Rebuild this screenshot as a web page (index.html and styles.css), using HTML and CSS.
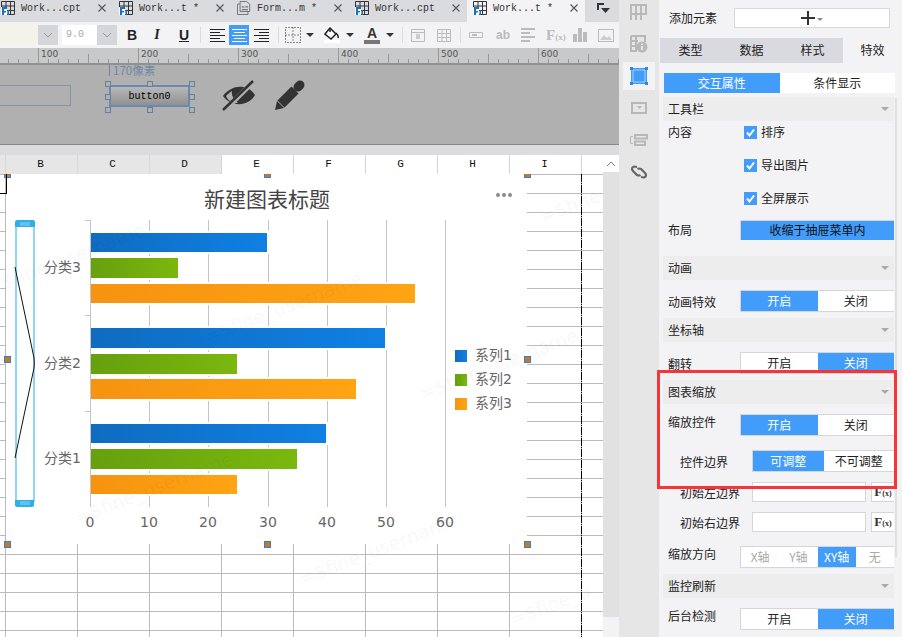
FILE: index.html
```html
<!doctype html>
<html lang="zh">
  <head>
    <meta charset="utf-8" />
    <title>图表缩放</title>
    <link rel="stylesheet" href="styles.css">
  </head>
  <body>
    <svg class="defs" width="0" height="0">
      <symbol id="i-cpt" viewBox="0 0 14 14">
        <path d="M.5.5h13v13H.5zM.5 5h13M5 .5V13.5M9.500 .5V13.500M.5 9.500h13" fill="none" stroke="#333"/>
        <path d="M0 6h6v8H0z" fill="#fff"/>
        <path d="M1 6h5v2H3v2h2v1.500H3V14H1zM6.500 9H8v5H6.500z" fill="#1273c4"/>
      </symbol>
      <symbol id="i-frm" viewBox="0 0 16 16">
        <path d="M1 3.500h2M.5 3.500V15.500H12.500V12M3.500 .5H11l3.500 3V12H3.500z" fill="none" stroke="#666"/>
        <path d="M5.500 6h3v1.500h-3zM9.500 6h3v1.500h-3zM5.500 9h7v1.500h-7z" fill="#777"/>
      </symbol>
      <symbol id="i-close" viewBox="0 0 8 8">
        <path d="M.5.5l7 7M7.500 .5l-7 7" fill="none" stroke="#555" stroke-width="1.100"/>
      </symbol>
    </svg>

    <div class="app">
      <div class="editor">
        <div class="tabbar">
          <div class="tab"><svg class="tab-icon"><use href="#i-cpt"/></svg><span class="tab-name">Work...cpt</span><svg class="tab-x"><use href="#i-close"/></svg></div>
          <div class="tab"><svg class="tab-icon"><use href="#i-cpt"/></svg><span class="tab-name">Work...t *</span><svg class="tab-x"><use href="#i-close"/></svg></div>
          <div class="tab"><svg class="tab-icon"><use href="#i-frm"/></svg><span class="tab-name">Form...m *</span><svg class="tab-x"><use href="#i-close"/></svg></div>
          <div class="tab"><svg class="tab-icon"><use href="#i-cpt"/></svg><span class="tab-name">Work...cpt</span><svg class="tab-x"><use href="#i-close"/></svg></div>
          <div class="tab active"><svg class="tab-icon"><use href="#i-cpt"/></svg><span class="tab-name">Work...t *</span><svg class="tab-x"><use href="#i-close"/></svg></div>
          <svg class="tab-more" width="14" height="12" viewBox="0 0 14 12"><path d="M1 0h7v2H3v5H1zM5 5h9l-4.500 5z" fill="#333"/></svg>
        </div>

        <div class="toolbar">
          <div class="combo combo-font"><span class="combo-value"></span><span class="combo-arrow"><svg width="10" height="6" viewBox="0 0 10 6"><path d="M1 1l4 4 4-4" fill="none" stroke="#999"/></svg></span></div>
          <div class="combo combo-size"><span class="combo-value">9.0</span><span class="combo-arrow"><svg width="10" height="6" viewBox="0 0 10 6"><path d="M1 1l4 4 4-4" fill="none" stroke="#999"/></svg></span></div>
          <span class="tool t-bold">B</span>
          <span class="tool t-italic">I</span>
          <span class="tool t-under">U</span>
          <span class="sep s-1"></span>
          <span class="tool t-align"><svg width="15" height="13" viewBox="0 0 15 13"><path d="M0 .5h15M0 3.500h10M0 6.500h15M0 9.500h10M0 12.500h15" stroke="#222"/></svg></span>
          <span class="tool t-align on"><svg width="15" height="13" viewBox="0 0 15 13"><path d="M0 .5h15M2 3.500h11M0 6.500h15M2 9.500h11M0 12.500h15" stroke="#fff"/></svg></span>
          <span class="tool t-align"><svg width="15" height="13" viewBox="0 0 15 13"><path d="M0 .5h15M5 3.500h10M0 6.500h15M5 9.500h10M0 12.500h15" stroke="#222"/></svg></span>
          <span class="sep s-2"></span>
          <svg class="t-border" width="16" height="16" viewBox="0 0 16 16"><path d="M.5.5h15v15H.5zM8 .5v15M.5 8h15" fill="none" stroke="#222" stroke-dasharray="1 2"/></svg>
          <span class="caret c-border"></span>
          <svg class="t-fill" width="16" height="16" viewBox="0 0 16 16"><path d="M6 1l6 6-5 5-6-5z" fill="#fff" stroke="#222" stroke-width="1.500"/><path d="M6 1v4M12 6c2 2 3 3 2 5" fill="none" stroke="#222" stroke-width="1.500"/><path d="M0 13h16v3H0z" fill="#fff"/></svg>
          <span class="caret c-fill"></span>
          <span class="t-color">A</span>
          <span class="caret c-color"></span>
          <span class="sep s-3"></span>
          <svg class="t-cell1" width="14" height="13" viewBox="0 0 14 13"><path d="M.5.5h13v12H.5zM.5 3.500h13" fill="none" stroke="#bbb"/><path d="M5 5h4v5H5z" fill="#ccc"/></svg>
          <svg class="t-cell2" width="14" height="13" viewBox="0 0 14 13"><path d="M.5.5h13v12H.5zM.5 4.500h13M.5 8.500h13M5 .5v12M9.500 .5v12" fill="none" stroke="#bbb"/></svg>
          <span class="sep s-4"></span>
          <svg class="t-field" width="14" height="6" viewBox="0 0 14 6"><path d="M.5.5h13v5H.5z" fill="none" stroke="#bbb"/><path d="M3 2h5v2H3z" fill="#bbb"/></svg>
          <span class="t-ab">ab</span>
          <svg class="t-lines" width="14" height="14" viewBox="0 0 14 14"><path d="M0 1h14M0 5h9M0 9h14M0 13h9" stroke="#bbb" stroke-width="2"/></svg>
          <span class="t-fx">F<small>(x)</small></span>
          <svg class="t-bars" width="14" height="14" viewBox="0 0 14 14"><path d="M0 6h4v8H0zM5 0h4v14H5zM10 4h4v10h-4z" fill="#bbb"/></svg>
          <svg class="t-pic" width="16" height="13" viewBox="0 0 16 13"><path d="M.5.5h15v12H.5z" fill="none" stroke="#bbb"/><path d="M2 11l4-5 3 3 2-2 3 4z" fill="#ccc"/></svg>
        </div>

        <div class="ruler">
          <div class="ruler-cell"></div>
          <div class="ruler-cell">100</div>
          <div class="ruler-cell">200</div>
          <div class="ruler-cell">300</div>
          <div class="ruler-cell">400</div>
          <div class="ruler-cell">500</div>
          <div class="ruler-cell">600</div>
        </div>

        <div class="form-area">
          <div class="ghost-input"></div>
          <div class="widget">
            <span class="widget-size">170像素</span>
            <div class="widget-btn">button0</div>
            <i class="grip g1"></i><i class="grip g2"></i><i class="grip g3"></i><i class="grip g4"></i>
            <i class="grip g5"></i><i class="grip g6"></i><i class="grip g7"></i><i class="grip g8"></i>
          </div>
          <svg class="eye" width="34" height="32" viewBox="0 0 34 32">
            <path d="M1 16C9 5 25 3 33 15 27 26 10 28 1 16z" fill="#333"/>
            <path d="M4 16C6 21 11 23 16 23 12 20 9 15 10 11 8 12 6 14 4 16z" fill="#b0b0b0"/>
            <path d="M2 31L31 2" stroke="#b0b0b0" stroke-width="5"/>
            <path d="M1 30L31 1" stroke="#333" stroke-width="2.500"/>
          </svg>
          <svg class="pencil" width="31" height="31" viewBox="0 0 31 31">
            <path d="M1 30l2-9 7 7z" fill="#333"/>
            <path d="M7 24L21 10" stroke="#333" stroke-width="10"/>
            <path d="M24 7l2-2" stroke="#333" stroke-width="9" stroke-linecap="round"/>
          </svg>
        </div>

        <div class="form-gap"></div>

        <div class="col-head">
          <div class="col col-stub"></div>
          <div class="col col-on">B</div>
          <div class="col col-on">C</div>
          <div class="col col-on">D</div>
          <div class="col">E</div>
          <div class="col">F</div>
          <div class="col">G</div>
          <div class="col">H</div>
          <div class="col">I</div>
          <div class="col"></div>
        </div>

        <div class="sheet-wrap">
          <div class="sheet">
            <div class="cell-mark"></div>
            <div class="page-break"></div>

            <svg class="chart" width="521" height="370" viewBox="6 174 521 370">
              <defs>
                <linearGradient id="g-blue"><stop offset="0" stop-color="#0f6cc0"/><stop offset="1" stop-color="#0f80e3"/></linearGradient>
                <linearGradient id="g-green"><stop offset="0" stop-color="#66a00e"/><stop offset="1" stop-color="#7ab80e"/></linearGradient>
                <linearGradient id="g-orange"><stop offset="0" stop-color="#f69310"/><stop offset="1" stop-color="#ffa413"/></linearGradient>
              </defs>
              <rect x="6" y="174" width="521" height="370" fill="#fff"/>
              <text class="chart-title" x="267" y="207" text-anchor="middle">新建图表标题</text>
              <g fill="#888"><circle cx="498" cy="195" r="2"/><circle cx="504" cy="195" r="2"/><circle cx="510" cy="195" r="2"/></g>

              <path class="grid" d="M149.500 220V507M208.500 220V507M268.500 220V507M327.500 220V507M386.500 220V507M445.500 220V507"/>
              <path class="grid" d="M90.500 220V507M85 220.500H90M85 315.500H90M85 411.500H90"/>

              <g fill="#fff">
                <rect x="91" y="231" width="178" height="23"/><rect x="91" y="256" width="89" height="24"/><rect x="91" y="282" width="326" height="23"/>
                <rect x="91" y="326" width="296" height="24"/><rect x="91" y="352" width="148" height="24"/><rect x="91" y="377" width="267" height="24"/>
                <rect x="91" y="422" width="237" height="23"/><rect x="91" y="447" width="208" height="24"/><rect x="91" y="473" width="148" height="23"/>
              </g>
              <rect fill="url(#g-blue)" x="91" y="233" width="176" height="19"/>
              <rect fill="url(#g-green)" x="91" y="258" width="87" height="20"/>
              <rect fill="url(#g-orange)" x="91" y="284" width="324" height="19"/>
              <rect fill="url(#g-blue)" x="91" y="328" width="294" height="20"/>
              <rect fill="url(#g-green)" x="91" y="354" width="146" height="20"/>
              <rect fill="url(#g-orange)" x="91" y="379" width="265" height="20"/>
              <rect fill="url(#g-blue)" x="91" y="424" width="235" height="19"/>
              <rect fill="url(#g-green)" x="91" y="449" width="206" height="20"/>
              <rect fill="url(#g-orange)" x="91" y="475" width="146" height="19"/>

              <g class="chart-label" text-anchor="end">
                <text x="81" y="272">分类3</text>
                <text x="81" y="368">分类2</text>
                <text x="81" y="463">分类1</text>
              </g>
              <g class="chart-label" text-anchor="middle">
                <text x="90" y="527">0</text>
                <text x="149" y="527">10</text>
                <text x="208" y="527">20</text>
                <text x="268" y="527">30</text>
                <text x="327" y="527">40</text>
                <text x="386" y="527">50</text>
                <text x="445" y="527">60</text>
              </g>

              <rect x="455" y="350" width="12" height="12" fill="url(#g-blue)"/>
              <rect x="455" y="374" width="12" height="12" fill="url(#g-green)"/>
              <rect x="455" y="398" width="12" height="12" fill="url(#g-orange)"/>
              <g class="chart-label">
                <text x="475" y="360">系列1</text>
                <text x="475" y="384">系列2</text>
                <text x="475" y="408">系列3</text>
              </g>

              <!-- 缩放控件 -->
              <rect x="16" y="226" width="18" height="275" fill="#fff" stroke="#8fd6f5" stroke-width="2"/>
              <path d="M15 222q0-2 2-2h16q2 0 2 2v5H15zM15 500h19v5q0 2-2 2H17q-2 0-2-2z" fill="#30aee6"/>
              <path d="M20 223h10M20 225h10M20 502h10M20 504h10" stroke="#8fd6f5"/>
              <path d="M15 267L34 358Q34.500 363 34 368L15 458" fill="none" stroke="#111"/>
            </svg>

            <div class="selection">
              <i class="knob k1"></i><i class="knob k2"></i><i class="knob k3"></i><i class="knob k4"></i>
              <i class="knob k5"></i><i class="knob k6"></i><i class="knob k7"></i><i class="knob k8"></i>
            </div>

            <span class="wm wm1">$fine_username</span>
            <span class="wm wm2">=$fine_username</span>
            <span class="wm wm3">=$fine_username</span>
            <span class="wm wm4">=$fine_username</span>
            <span class="wm wm5">=$fine_username</span>
            <span class="wm wm6">=$fine</span>
            <span class="wm wm7">=$fine_u</span>
          </div>
          <div class="vscroll">
            <div class="vscroll-up"><svg width="10" height="6" viewBox="0 0 10 6"><path d="M1 5l4-4 4 4" fill="none" stroke="#777"/></svg></div>
            <div class="vscroll-track"></div>
          </div>
        </div>
      </div>

      <div class="rail">
        <div class="rail-item"><svg width="18" height="17" viewBox="0 0 18 17"><path d="M1 1h15v9H1zM1 10v6M6 1v15M11 1v15M16 1v9" fill="none" stroke="#b8b8b8" stroke-width="2"/></svg></div>
        <div class="rail-item"><svg width="18" height="18" viewBox="0 0 18 18"><path d="M1 1h14v6M1 1v15h6M1 6h7M1 11h5M6 1v15" fill="none" stroke="#b8b8b8" stroke-width="2"/><circle cx="12" cy="12" r="5.500" fill="#b8b8b8"/><path d="M11 11h2v4h-2zM11 8.500h2v1.500h-2z" fill="#e6e6e6"/></svg></div>
        <div class="rail-item on"><svg width="18" height="18" viewBox="0 0 18 18"><path d="M1.500 1.500h15v15h-15z" fill="#429cfa" stroke="#429cfa"/><path d="M3 3h12v12H3z" fill="#429cfa" stroke="#e8f2fd" stroke-width=".6"/><path d="M0 0h3v3H0zM15 0h3v3h-3zM0 15h3v3H0zM15 15h3v3h-3z" fill="#2f86e6"/></svg></div>
        <div class="rail-item"><svg width="16" height="12" viewBox="0 0 16 12"><path d="M1 1h14v10H1z" fill="none" stroke="#b8b8b8" stroke-width="2"/><path d="M6 4h5l-2.500 3z" fill="#b8b8b8"/></svg></div>
        <div class="rail-item"><svg width="18" height="12" viewBox="0 0 18 12"><path d="M3 2.500H.5v7H3" fill="none" stroke="#b8b8b8"/><path d="M5 1h12v3.500H5zM5 7.500h10V11H5z" fill="none" stroke="#b8b8b8" stroke-width="2"/></svg></div>
        <div class="rail-item"><svg width="16" height="16" viewBox="0 0 16 16"><path d="M6 3l-3-.5Q1 3 1 5q0 1 1 2l4 4q2 1 3.500 0M10 13l3 .5q2-.5 2-2.500 0-1-1-2L10 5Q8 4 6.500 5" fill="none" stroke="#666" stroke-width="2.200"/></svg></div>
      </div>

      <div class="panel">
        <div class="add-row">
          <span class="add-label">添加元素</span>
          <div class="add-box"><svg width="14" height="14" viewBox="0 0 14 14"><path d="M0 7h14M7 0v14" stroke="#333" stroke-width="2"/></svg><span class="add-caret"></span></div>
        </div>

        <div class="tabs">
          <div class="tabs-item">类型</div>
          <div class="tabs-item">数据</div>
          <div class="tabs-item">样式</div>
          <div class="tabs-item on">特效</div>
        </div>

        <div class="subtabs">
          <div class="subtab on">交互属性</div>
          <div class="subtab">条件显示</div>
        </div>

        <div class="head head-first">工具栏<span class="head-caret"></span></div>
        <div class="check-row"><span class="label">内容</span><span class="check"><svg width="13" height="13" viewBox="0 0 13 13"><path d="M3 6.500l2.500 3L10 3.500" fill="none" stroke="#fff" stroke-width="2"/></svg></span>排序</div>
        <div class="check-row"><span class="label"></span><span class="check"><svg width="13" height="13" viewBox="0 0 13 13"><path d="M3 6.500l2.500 3L10 3.500" fill="none" stroke="#fff" stroke-width="2"/></svg></span>导出图片</div>
        <div class="check-row"><span class="label"></span><span class="check"><svg width="13" height="13" viewBox="0 0 13 13"><path d="M3 6.500l2.500 3L10 3.500" fill="none" stroke="#fff" stroke-width="2"/></svg></span>全屏展示</div>
        <div class="layout-row"><span class="label">布局</span><div class="layout-btn">收缩于抽屉菜单内</div></div>

        <div class="head head-wide">动画<span class="head-caret"></span></div>
        <div class="row"><span class="label">动画特效</span><div class="toggle"><span class="seg on">开启</span><span class="seg">关闭</span></div></div>

        <div class="head">坐标轴<span class="head-caret"></span></div>
        <div class="row"><span class="label">翻转</span><div class="toggle"><span class="seg">开启</span><span class="seg on">关闭</span></div></div>

        <div class="head">图表缩放<span class="head-caret"></span></div>
        <div class="row"><span class="label label-up">缩放控件</span><div class="toggle"><span class="seg on">开启</span><span class="seg">关闭</span></div></div>
        <div class="row row-wide row-sub"><span class="label">控件边界</span><div class="toggle"><span class="seg on">可调整</span><span class="seg">不可调整</span></div></div>
        <div class="row row-field row-sub"><span class="label">初始左边界</span><div class="input"></div><div class="fx">F<small>(x)</small></div></div>
        <div class="row row-field row-sub"><span class="label">初始右边界</span><div class="input"></div><div class="fx">F<small>(x)</small></div></div>
        <div class="row row-wide"><span class="label label-up">缩放方向</span><div class="toggle toggle-dim"><span class="seg">X轴</span><span class="seg">Y轴</span><span class="seg on">XY轴</span><span class="seg">无</span></div></div>

        <div class="head">监控刷新<span class="head-caret"></span></div>
        <div class="row"><span class="label label-up">后台检测</span><div class="toggle"><span class="seg">开启</span><span class="seg on">关闭</span></div></div>

        <div class="panel-scroll"></div>
      </div>

      <div class="red-box"></div>
    </div>
  </body>
</html>
```

FILE: styles.css
```css
* {
  box-sizing: border-box;
}

html,
body {
  margin: 0;
  height: 100%;
  overflow: hidden;
}

body {
  font-family: "Noto Sans CJK SC", "Liberation Sans", sans-serif;
  font-size: 12px;
  color: #222;
}

.defs {
  position: absolute;
}

.app {
  position: relative;
  display: flex;
  width: 902px;
  height: 637px;
  overflow: hidden;
  background: #f3f3f6;
}

.editor {
  display: flex;
  flex-direction: column;
  width: 619px;
  flex: none;
  overflow: hidden;
}

/* onglets */
.tabbar {
  display: flex;
  height: 22px;
  flex: none;
  margin-left: -5px;
  width: 624px;
  background: #d9dbdf;
  font-family: "Liberation Mono", monospace;
  font-size: 10px;
}

.tab {
  position: relative;
  display: flex;
  align-items: flex-start;
  width: 118px;
  flex: none;
  padding: 1px 0 0 6px;
}

.tab.active {
  background: #f3f3f6;
}

.tab-icon {
  width: 14px;
  height: 14px;
  flex: none;
}

.tab-name {
  margin-left: 6px;
  color: #333;
  line-height: 16px;
}

.tab-x {
  position: absolute;
  left: 103px;
  top: 4px;
  width: 8px;
  height: 8px;
}

.tab-more {
  margin: 3px 0 0 11px;
}

/* barre d'outils */
.toolbar {
  display: flex;
  align-items: center;
  height: 26px;
  flex: none;
  background: #f3f3f6;
}

.combo {
  display: flex;
  height: 20px;
}

.combo-font {
  width: 58px;
}

.combo-font .combo-value {
  width: 38px;
  background: #f3f3ea;
}

.combo-size {
  width: 55px;
  margin-left: 4px;
}

.combo-size .combo-value {
  width: 35px;
  padding-left: 4px;
  background: #fff;
  color: #aaa;
  font-family: "Liberation Mono", monospace;
  font-size: 10px;
  line-height: 20px;
}

.combo-arrow {
  display: flex;
  align-items: center;
  justify-content: center;
  width: 20px;
  background: #d5d6da;
}

.tool {
  display: flex;
  align-items: center;
  justify-content: center;
  height: 20px;
  color: #222;
  font-family: "Liberation Sans", sans-serif;
  font-size: 14px;
  font-weight: 700;
}

.t-bold {
  width: 26px;
  margin-left: 2px;
}

.t-italic {
  width: 24px;
  font-family: "Liberation Serif", serif;
  font-style: italic;
}

.t-under {
  width: 30px;
  text-decoration: underline;
}

.t-align {
  width: 20px;
  margin-left: 2px;
}

.t-align.on {
  background: #429cfa;
}

.sep {
  width: 1px;
  height: 16px;
  background: #dcdce0;
  flex: none;
}

.s-1 {
  margin: 0 4px 0 1px;
}

.s-2 {
  margin-left: 7px;
}

.s-3 {
  margin-left: 8px;
}

.s-4 {
  margin-left: 9px;
}

.t-border {
  margin-left: 6px;
}

.caret {
  width: 0;
  height: 0;
  border-left: 4px solid transparent;
  border-right: 4px solid transparent;
  border-top: 4px solid #333;
}

.c-border {
  margin-left: 5px;
}

.t-fill {
  margin-left: 10px;
}

.c-fill {
  margin-left: 6px;
}

.t-color {
  width: 16px;
  margin-left: 10px;
  border-bottom: 4px solid #777;
  font-family: "Liberation Sans", sans-serif;
  font-size: 14px;
  font-weight: 700;
  line-height: 14px;
  text-align: center;
  color: #333;
}

.c-color {
  margin-left: 6px;
}

.t-cell1 {
  margin-left: 8px;
}

.t-cell2 {
  margin-left: 12px;
}

.t-field {
  margin-left: 8px;
}

.t-ab {
  width: 14px;
  margin-left: 13px;
  font-family: "Liberation Sans", sans-serif;
  font-size: 12px;
  font-weight: 700;
  color: #bbb;
}

.t-lines {
  margin-left: 11px;
}

.t-fx {
  width: 17px;
  margin-left: 11px;
  font-family: "Liberation Serif", serif;
  font-size: 15px;
  font-weight: 700;
  color: #bbb;
  white-space: nowrap;
}

.t-fx small {
  font-size: 9px;
}

.t-bars {
  margin-left: 10px;
}

.t-pic {
  margin-left: 11px;
}

/* règle */
.ruler {
  display: flex;
  height: 17px;
  flex: none;
  width: 681px;
  margin-left: -62px;
  background: #c8c9cb;
  border-bottom: 2px solid #919191;
}

.ruler-cell {
  width: 100px;
  flex: none;
  padding-left: 2px;
  border-left: 1px solid #999;
  color: #555;
  font-family: "DejaVu Sans", sans-serif;
  font-size: 9px;
  line-height: 12px;
  background-image:
    linear-gradient(#999, #999),
    linear-gradient(to right, #999 1px, transparent 1px);
  background-repeat: no-repeat, repeat-x;
  background-size: 1px 9px, 10px 4px;
  background-position: 49px bottom, -1px bottom;
}

/* zone du formulaire */
.form-area {
  display: flex;
  align-items: center;
  height: 80px;
  flex: none;
  padding-bottom: 18px;
  background: #b0b0b0;
  border-bottom: 1px solid #888;
}

.ghost-input {
  width: 71px;
  height: 21px;
  border: 1px solid #8696aa;
  border-left: 0;
}

.widget {
  position: relative;
  width: 81px;
  height: 22px;
  margin-left: 38px;
}

.widget-size {
  position: absolute;
  left: 0;
  top: -21px;
  padding-left: 3px;
  border-left: 1px solid #6f88a8;
  color: #6f88a8;
  font-size: 11.500px;
  line-height: 12px;
  white-space: nowrap;
}

.widget-btn {
  height: 22px;
  border: 2px solid #6a8ab3;
  background: linear-gradient(#b8b8b8, #919191);
  color: #000;
  font-family: "Liberation Mono", monospace;
  font-size: 10px;
  line-height: 19px;
  text-align: center;
}

.grip {
  position: absolute;
  width: 6px;
  height: 6px;
  border: 1px solid #6a8099;
  background: #b0b0b0;
}

.g1 { left: -4px; top: -4px; }
.g2 { left: 38px; top: -4px; }
.g3 { left: 80px; top: -4px; }
.g4 { left: -4px; top: 9px; }
.g5 { left: 80px; top: 9px; }
.g6 { left: -4px; top: 22px; }
.g7 { left: 38px; top: 22px; }
.g8 { left: 80px; top: 22px; }

.eye {
  margin-left: 32px;
  flex: none;
}

.pencil {
  margin-left: 18px;
  flex: none;
}

.form-gap {
  height: 10px;
  flex: none;
  background: #dcdcde;
}

/* entêtes de colonnes */
.col-head {
  display: flex;
  height: 19px;
  flex: none;
  width: 603px;
  background: #fff;
  font-family: "Liberation Mono", monospace;
  font-size: 11px;
  line-height: 19px;
  text-align: center;
  color: #111;
}

.col {
  width: 72px;
  flex: none;
  padding-right: 2px;
  border-right: 1px solid #d6d6d6;
}

.col-stub {
  width: 6px;
  padding-right: 0;
  background: #e6e6e6;
}

.col-on {
  background: #e6e6e6;
}

/* feuille */
.sheet-wrap {
  position: relative;
  flex: 1;
  min-height: 0;
}

.sheet {
  position: relative;
  width: 603px;
  height: 463px;
  overflow: hidden;
  background-color: #fff;
  background-image:
    linear-gradient(#bbb 1px, transparent 1px),
    linear-gradient(to right, #bbb 1px, transparent 1px);
  background-size: 100% 19px, 72px 100%;
  background-position: 0 0, 5px 0;
}

.cell-mark {
  position: absolute;
  left: 0;
  top: 0;
  z-index: 2;
  width: 7px;
  height: 20px;
  border-right: 1px solid #000;
  border-bottom: 1px solid #000;
}

.page-break {
  position: absolute;
  left: 581px;
  top: 0;
  width: 1px;
  height: 100%;
  background: repeating-linear-gradient(#000 0 8px, #bbb 8px 9px, #000 9px 10px, #bbb 10px 11px);
}

.chart {
  position: absolute;
  left: 6px;
  top: 0;
  display: block;
}

.chart-title {
  font-family: "Noto Sans CJK SC", sans-serif;
  font-size: 21px;
  fill: #444;
}

.chart-label {
  font-family: "DejaVu Sans", "Noto Sans CJK SC", sans-serif;
  font-size: 14px;
  fill: #666;
}

.grid {
  fill: none;
  stroke: #c4c4c4;
}

.selection {
  position: absolute;
  left: 7.500px;
  top: .5px;
  width: 520px;
  height: 370px;
}

.knob {
  position: absolute;
  width: 7px;
  height: 7px;
  margin: -3.500px 0 0 -3.500px;
  border: 1px solid #2f7fe6;
  background: #c97a14;
}

.k1 { left: 0; top: 0; }
.k2 { left: 50%; top: 0; }
.k3 { left: 100%; top: 0; }
.k4 { left: 0; top: 50%; }
.k5 { left: 100%; top: 50%; }
.k6 { left: 0; top: 100%; }
.k7 { left: 50%; top: 100%; }
.k8 { left: 100%; top: 100%; }

.wm {
  position: absolute;
  color: rgba(0, 0, 0, .045);
  font-family: "DejaVu Sans", sans-serif;
  font-size: 19px;
  white-space: nowrap;
  transform: rotate(-21deg);
  transform-origin: left center;
  pointer-events: none;
}

.wm1 { left: 2px; top: 98px; }
.wm2 { left: 205px; top: 152px; }
.wm3 { left: 75px; top: 333px; }
.wm4 { left: 420px; top: 209px; }
.wm5 { left: 300px; top: 394px; }
.wm6 { left: 540px; top: 32px; }
.wm7 { left: 510px; top: 435px; }

.vscroll {
  position: absolute;
  left: 603px;
  top: 0;
  width: 16px;
  margin-top: -19px;
}

.vscroll-up {
  display: flex;
  align-items: center;
  justify-content: center;
  height: 17px;
  background: #fff;
}

.vscroll-track {
  height: 445px;
  background: #e1e1e1;
}

/* rail d'icônes */
.rail {
  display: flex;
  flex-direction: column;
  align-items: center;
  gap: 4px;
  width: 40px;
  flex: none;
  margin-top: -2px;
  background: #e6e6e6;
}

.rail-item {
  display: flex;
  align-items: center;
  justify-content: center;
  width: 32px;
  height: 28px;
  flex: none;
}

.rail-item.on {
  background: #f3f3f6;
}

/* panneau */
.panel {
  position: relative;
  width: 243px;
  flex: none;
  background: #f3f3f6;
}

.add-row {
  display: flex;
  align-items: center;
  height: 20px;
  margin-top: 8px;
  padding-left: 10px;
}

.add-label {
  width: 65px;
  padding-bottom: 2px;
}

.add-box {
  display: flex;
  align-items: center;
  justify-content: center;
  width: 156px;
  height: 20px;
  border: 1px solid #d8d8dc;
  background: #fff;
}

.add-caret {
  margin: 2px 0 0 2px;
  border-left: 3px solid transparent;
  border-right: 3px solid transparent;
  border-top: 3px solid #888;
}

.tabs {
  display: flex;
  width: 242px;
  height: 25px;
  margin: 10px 0 0 1px;
}

.tabs-item {
  width: 61px;
  flex: none;
  line-height: 24px;
  text-align: center;
  background: #d9dadf;
}

.tabs-item.on {
  width: 59px;
  background: #f3f3f6;
}

.subtabs {
  display: flex;
  width: 231px;
  margin: 10px 0 0 5px;
}

.subtab {
  flex: 1;
  height: 20px;
  line-height: 19px;
  text-align: center;
  background: #fff;
}

.subtab.on {
  background: #429cfa;
  color: #fff;
}

.head {
  position: relative;
  width: 231px;
  height: 24px;
  margin: 6px 0 0 4px;
  padding-left: 5px;
  line-height: 24px;
  background: #ededed;
}

.head-first {
  margin-top: 4px;
}

.head-wide {
  margin-top: 14px;
}

.head-caret {
  position: absolute;
  right: 5px;
  top: 10px;
  border-left: 4px solid transparent;
  border-right: 4px solid transparent;
  border-top: 4px solid #aaa;
}

.label {
  width: 72px;
  flex: none;
}

.label-up {
  margin-bottom: 8px;
}

.check-row {
  display: flex;
  align-items: flex-start;
  height: 22px;
  margin: 0 0 11px 9px;
  line-height: 21px;
}

.check {
  width: 13px;
  height: 13px;
  margin: 5px 4px 0;
  background: #429cfa;
}

.check svg {
  display: block;
}

.layout-row {
  display: flex;
  height: 22px;
  margin-left: 9px;
  line-height: 19px;
}

.layout-btn {
  width: 154px;
  height: 20px;
  border: 1px solid #d6d6da;
  border-width: 1px 0 0 1px;
  background: #429cfa;
  color: #111;
  line-height: 18px;
  text-align: center;
}

.row {
  display: flex;
  align-items: center;
  height: 22px;
  margin: 10px 0 0 9px;
}

.row-wide {
  margin-top: 14px;
}

.row-sub {
  padding-left: 12px;
}

.row-field {
  height: 20px;
}

.toggle {
  display: flex;
  flex: 1;
  max-width: 154px;
  height: 22px;
  border: 1px solid #d6d6da;
  border-right: 0;
  background: #fff;
}

.row-sub .toggle {
  max-width: 142px;
}

.seg {
  flex: 1;
  line-height: 20px;
  text-align: center;
}

.seg.on {
  background: #429cfa;
  color: #fff;
}

.toggle-dim .seg {
  color: #aaa;
}

.toggle-dim .seg.on {
  color: #fff;
}

.input {
  width: 114px;
  height: 20px;
  border: 1px solid #d6d6da;
  background: #fff;
}

.fx {
  width: 23px;
  height: 20px;
  margin-left: 5px;
  border: 1px solid #d6d6da;
  border-right: 0;
  background: #fff;
  color: #333;
  font-family: "Liberation Serif", serif;
  font-size: 13px;
  font-weight: 700;
  line-height: 18px;
  text-align: center;
}

.fx small {
  font-size: 8px;
}

.panel-scroll {
  position: absolute;
  left: 236px;
  top: 98px;
  width: 2px;
  height: 459px;
  background: #e0e0e0;
}

/* encadré rouge */
.red-box {
  position: absolute;
  left: 657px;
  top: 370px;
  width: 240px;
  height: 119px;
  border: 3px solid #f83438;
  pointer-events: none;
}
```
